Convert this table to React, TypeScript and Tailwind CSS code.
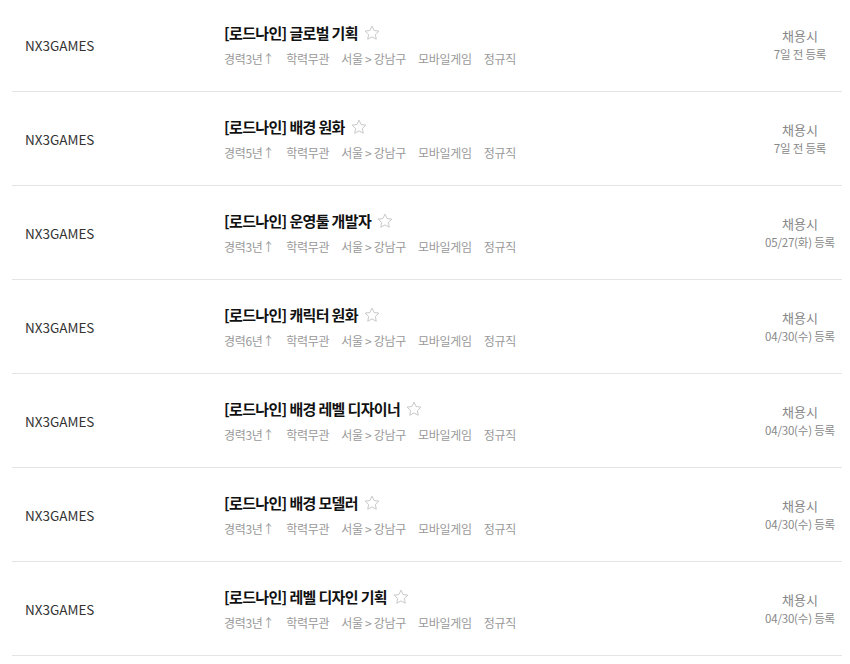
const JOBS = [
  { title: "[로드나인] 글로벌 기획", career: "경력3년↑", date: "7일 전 등록" },
  { title: "[로드나인] 배경 원화", career: "경력5년↑", date: "7일 전 등록" },
  { title: "[로드나인] 운영툴 개발자", career: "경력3년↑", date: "05/27(화) 등록" },
  { title: "[로드나인] 캐릭터 원화", career: "경력6년↑", date: "04/30(수) 등록" },
  { title: "[로드나인] 배경 레벨 디자이너", career: "경력3년↑", date: "04/30(수) 등록" },
  { title: "[로드나인] 배경 모델러", career: "경력3년↑", date: "04/30(수) 등록" },
  { title: "[로드나인] 레벨 디자인 기획", career: "경력3년↑", date: "04/30(수) 등록" },
];

function Star() {
  return (
    <svg width="18" height="18" viewBox="0 0 24 24" fill="none" stroke="#c4c4c4" strokeWidth="1.25" strokeLinejoin="round">
      <path d="M12 2.8l2.8 5.9 6.4.8-4.7 4.4 1.2 6.4L12 17.2l-5.7 3.1 1.2-6.4-4.7-4.4 6.4-.8z" />
    </svg>
  );
}

export default function App() {
  return (
    <div className="bg-white min-h-screen pl-3 pr-2 font-['Noto_Sans_CJK_KR','Noto_Sans',sans-serif]">
      <ul className="-mt-[2px]">
        {JOBS.map((job, i) => (
          <li key={i} className="flex items-center h-[94px] border-b border-[#e4e4e4]">
            <div className="w-[212px] pl-[13px] text-[13.5px] text-[#333] pt-[2px]">NX3GAMES</div>
            <div className="flex-1 flex flex-col">
              <div className="flex items-center gap-[5px]">
                <span className="text-[15px] font-bold text-[#111] leading-[20px] tracking-[-0.65px]">{job.title}</span>
                <Star />
              </div>
              <div className="flex gap-[12px] mt-[8px] text-[12px] text-[#999] leading-[16px] tracking-[-0.3px]">
                <span>{job.career}</span>
                <span>학력무관</span>
                <span>서울 &gt; 강남구</span>
                <span>모바일게임</span>
                <span>정규직</span>
              </div>
            </div>
            <div className="w-[84px] flex flex-col items-center text-center">
              <span className="text-[13px] text-[#888] leading-[18px]">채용시</span>
              <span className="text-[11.5px] text-[#888] leading-[16px] mt-[1px] whitespace-nowrap tracking-[-0.2px]">{job.date}</span>
            </div>
          </li>
        ))}
      </ul>
    </div>
  );
}
